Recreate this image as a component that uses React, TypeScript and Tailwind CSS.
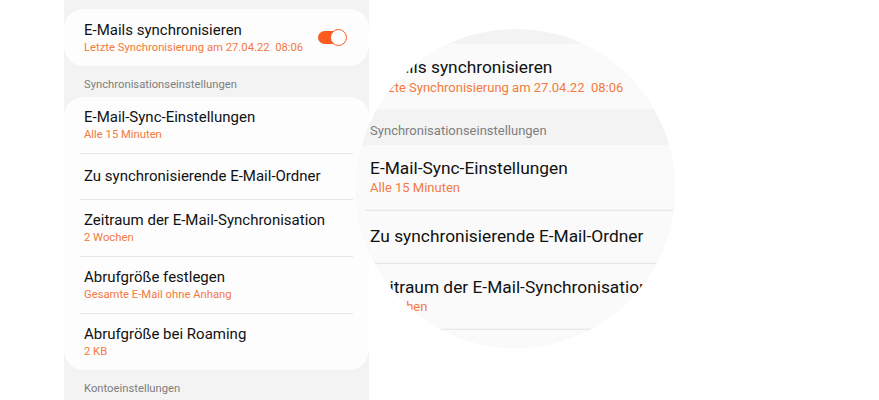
const rows = [
  { title: "E-Mail-Sync-Einstellungen", sub: "Alle 15 Minuten" },
  { title: "Zu synchronisierende E-Mail-Ordner" },
  { title: "Zeitraum der E-Mail-Synchronisation", sub: "2 Wochen" },
  { title: "Abrufgröße festlegen", sub: "Gesamte E-Mail ohne Anhang" },
  { title: "Abrufgröße bei Roaming", sub: "2 KB" },
]

function Row({ title, sub, last }: { title: string; sub?: string; last?: boolean }) {
  return (
    <div>
      <div className={`flex flex-col justify-center px-5 ${sub ? "h-[56px]" : "h-[45px]"}`}>
        <div className="text-[15px] leading-[19px] text-[#111]">{title}</div>
        {sub && <div className="text-[11.25px] leading-[15px] text-[#f27a3e]">{sub}</div>}
      </div>
      {!last && <div className="mx-4 h-px bg-[#e6e6e6]" />}
    </div>
  )
}

function Panel({ card, bg }: { card: string; bg: string }) {
  return (
    <div className={`h-full w-[305px] pt-[9px] ${bg}`}>
      <div className={`flex h-[57px] items-center justify-between rounded-[20px] pl-5 pr-[22px] ${card}`}>
        <div>
          <div className="text-[15px] leading-[19px] text-[#111]">E-Mails synchronisieren</div>
          <div className="text-[11.25px] leading-[15px] text-[#f27a3e]">
            Letzte Synchronisierung am 27.04.22&nbsp;&nbsp;08:06
          </div>
        </div>
        <div className="relative h-[17px] w-[29px]">
          <div className="absolute left-0 top-[2px] h-[13px] w-[26px] rounded-full bg-[#fc5b1e]" />
          <div className="absolute right-0 top-0 h-[17px] w-[17px] rounded-full border-[1.5px] border-[#fc5b1e] bg-white" />
        </div>
      </div>
      <div className="px-5 pb-[5px] pt-[12px] text-[11.25px] leading-[14px] text-[#7e7e7e]">
        Synchronisationseinstellungen
      </div>
      <div className={`rounded-[20px] ${card}`}>
        {rows.map((r, i) => (
          <Row key={r.title} title={r.title} sub={r.sub} last={i === rows.length - 1} />
        ))}
      </div>
      <div className="px-5 pb-[5px] pt-[12px] text-[11.25px] leading-[14px] text-[#7e7e7e]">
        Kontoeinstellungen
      </div>
    </div>
  )
}

export default function App() {
  return (
    <div className="relative h-[400px] w-[879px] overflow-hidden bg-white font-['Roboto',sans-serif]">
      <div className="ml-16 h-full">
        <Panel card="bg-[#fdfdfd]" bg="bg-[#f3f3f3]" />
      </div>
      {/* magnifier */}
      <div className="absolute left-[356px] top-[29px] h-[319px] w-[319px] overflow-hidden rounded-full bg-[#f4f4f4]">
        <div className="absolute left-[-9px] top-[4px] h-[420px] origin-top-left scale-[1.155]">
          <Panel card="bg-[#fafafa]" bg="bg-[#f3f3f3]" />
        </div>
      </div>
    </div>
  )
}
